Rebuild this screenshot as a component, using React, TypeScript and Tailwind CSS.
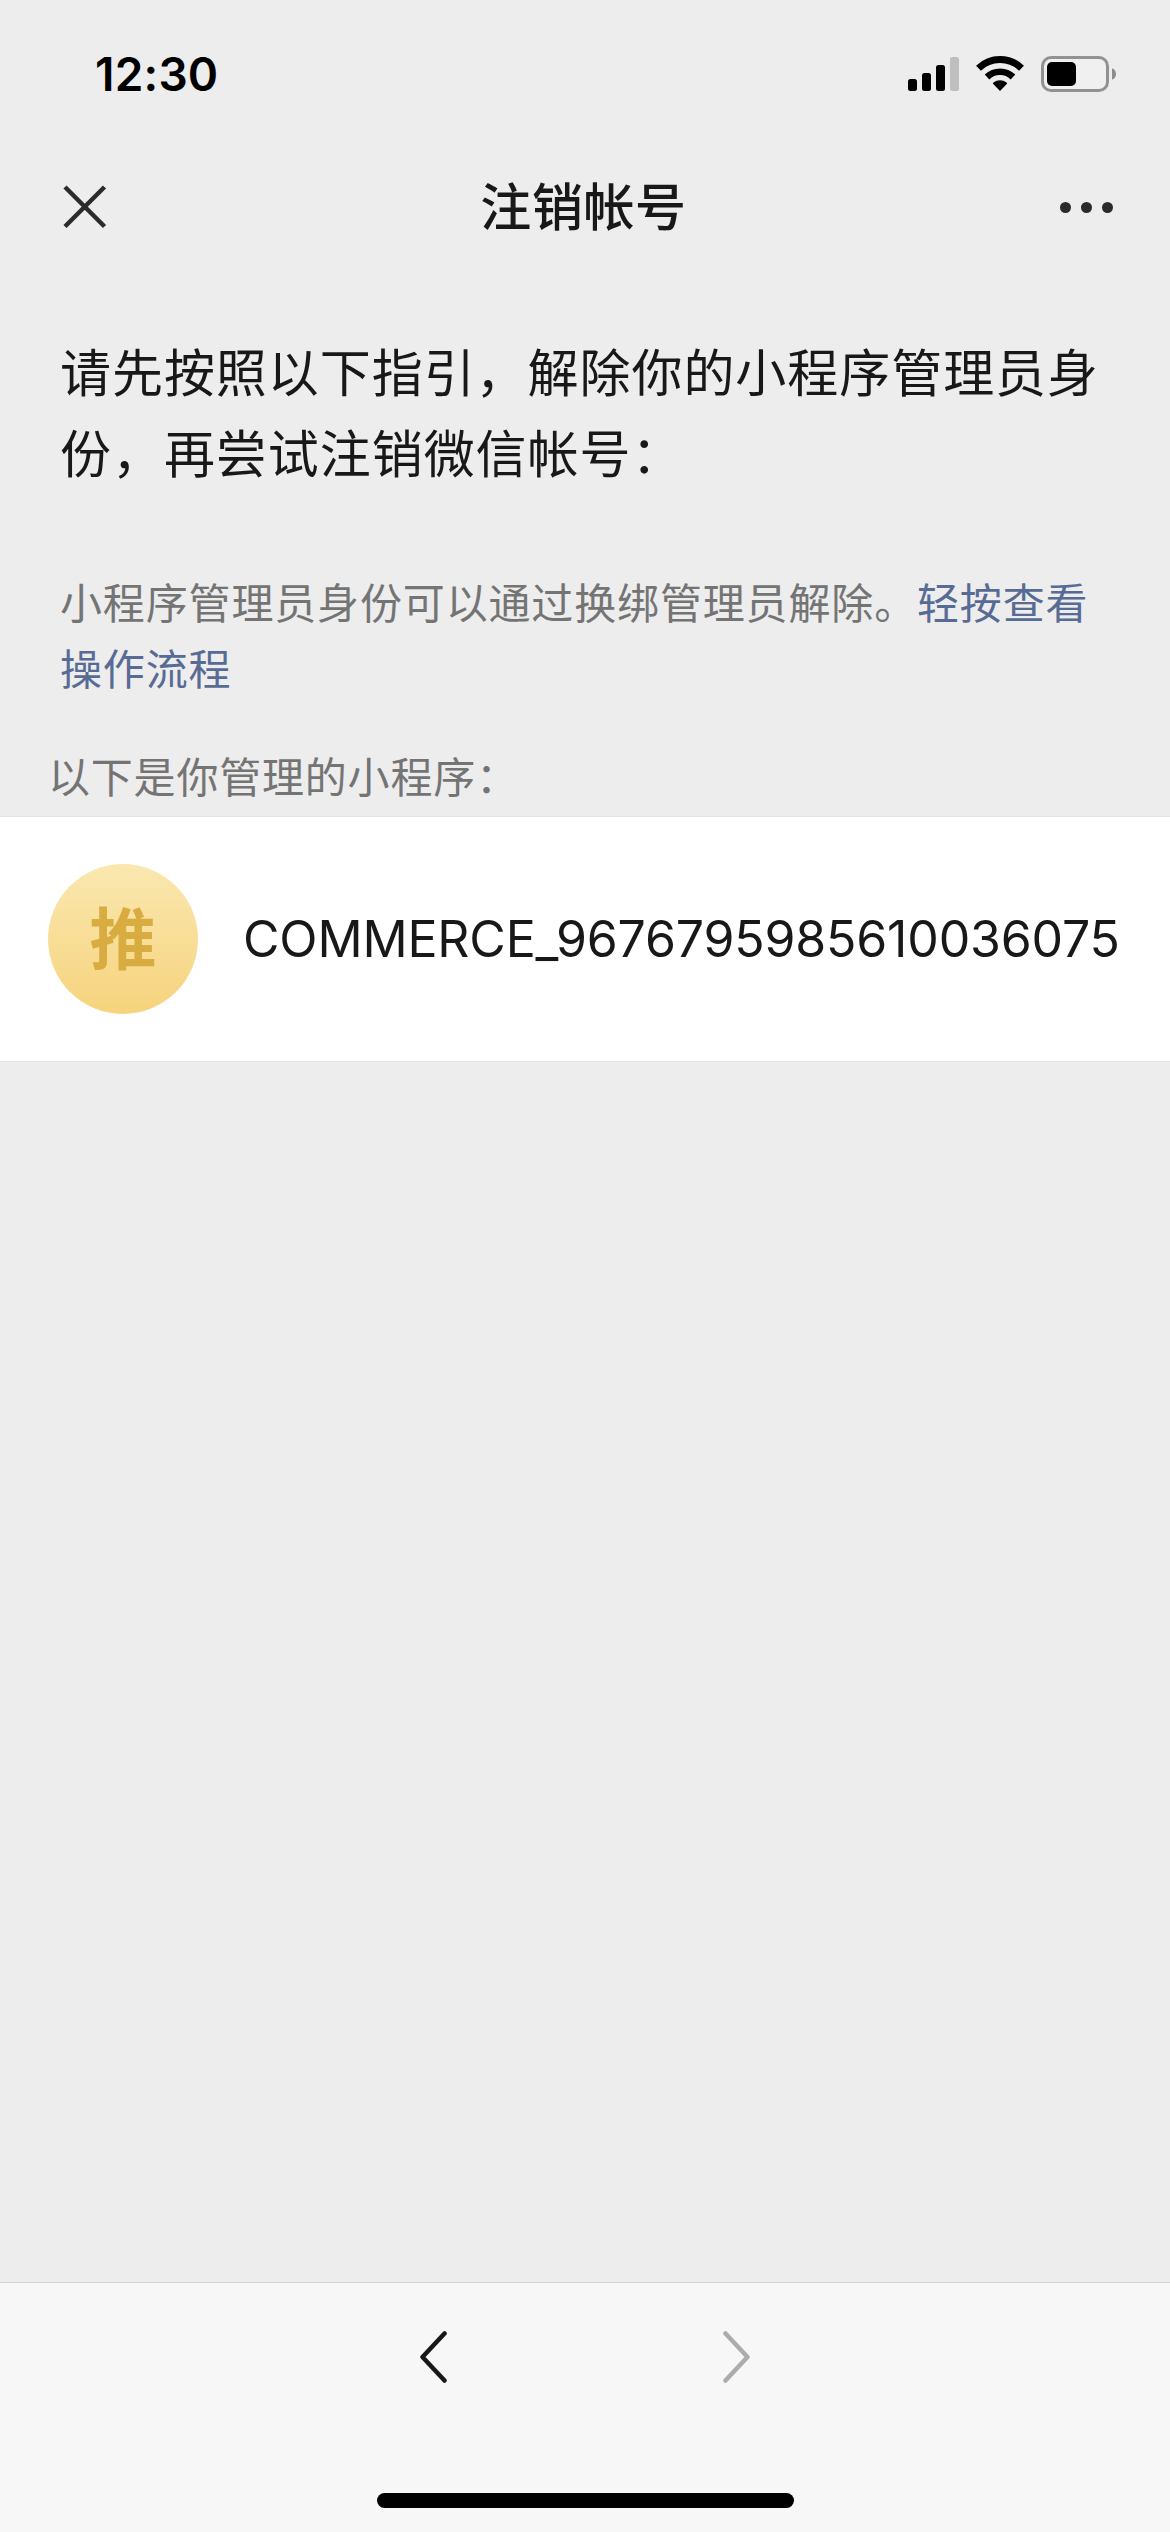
import React from "react";

const SignalIcon = () => (
  <svg width="51" height="34" viewBox="0 0 51 34">
    <rect x="0" y="22" width="9" height="12" rx="2.5" fill="#000" />
    <rect x="14" y="16" width="9" height="18" rx="2.5" fill="#000" />
    <rect x="28" y="8" width="9" height="26" rx="2.5" fill="#000" />
    <rect x="42" y="0" width="9" height="34" rx="2.5" fill="#bfbfbf" />
  </svg>
);

const WifiIcon = () => (
  <svg width="48" height="36" viewBox="0 0 48 36" fill="none">
    <path d="M2.5 13.2a31 31 0 0 1 43 0" stroke="#000" strokeWidth="7" />
    <path d="M11 22a18.8 18.8 0 0 1 26 0" stroke="#000" strokeWidth="6.6" />
    <path d="M24 36l-6.8-7q-.8-.9.2-1.6a11 11 0 0 1 13.2 0q1 .7.2 1.6z" fill="#000" />
  </svg>
);

const BatteryIcon = () => (
  <svg width="75" height="36" viewBox="0 0 75 36">
    <rect x="1.5" y="1.5" width="65" height="33" rx="8.5" fill="#f0f0f0" stroke="#929292" strokeWidth="3" />
    <rect x="6" y="6" width="29" height="24" rx="5" fill="#000" />
    <path d="M71 12.3c2.6 1 4 3.2 4 5.7s-1.4 4.7-4 5.7z" fill="#8c8c8c" />
  </svg>
);

const StatusBar = () => (
  <div className="flex h-[147px] items-start justify-between pl-[95px] pr-[54px]">
    <span className="mt-[44px] text-[46px] font-semibold leading-[60px] tracking-[0.2px] text-black">
      12:30
    </span>
    <div className="mt-[55px] flex items-end">
      <SignalIcon />
      <div className="ml-[17px]">
        <WifiIcon />
      </div>
      <div className="-mb-px ml-[17px]">
        <BatteryIcon />
      </div>
    </div>
  </div>
);

const NavBar = () => (
  <div className="flex h-[120px] items-center justify-between pl-[63px] pr-[57px]">
    <svg width="146" height="44" viewBox="0 0 146 44">
      <path d="M2 2l39.5 39.5M41.5 2L2 41.5" stroke="#2b2b2b" strokeWidth="4.5" />
    </svg>
    <h1 className="pt-0.5 text-[51px] font-medium leading-[72px] tracking-[0.6px] text-[#181818]">
      注销帐号
    </h1>
    <div className="flex w-[155px] justify-end gap-2.5">
      {[0, 1, 2].map((dot) => (
        <span key={dot} className="h-[11px] w-[11px] rounded-full bg-[#2b2b2b]" />
      ))}
    </div>
  </div>
);

const Footer = () => (
  <div className="flex h-[250px] flex-col items-center justify-between border-t border-[#d2d2d2] bg-[#f7f7f7] pb-6 pt-12">
    <div className="flex w-[330px] justify-between">
      <svg width="27" height="52" viewBox="0 0 27 52" fill="none">
        <path d="M24.5 2.5L2.5 26l22 23.5" stroke="#181818" strokeWidth="4.5" strokeLinecap="round" strokeLinejoin="round" />
      </svg>
      <svg width="27" height="52" viewBox="0 0 27 52" fill="none">
        <path d="M2.5 2.5l22 23.5-22 23.5" stroke="#acacac" strokeWidth="4.5" strokeLinecap="round" strokeLinejoin="round" />
      </svg>
    </div>
    <div className="h-[15px] w-[417px] rounded-full bg-black" />
  </div>
);

const App = () => {
  const miniPrograms = [{ badge: "推", name: "COMMERCE_9676795985610036075" }];

  return (
    <div className="flex h-[2532px] w-[1170px] flex-col overflow-hidden bg-[#ededed] font-['Inter','Noto_Sans_CJK_SC',sans-serif]">
      <StatusBar />
      <NavBar />

      <main className="flex-1">
        <div className="px-[60px] pt-[66px]">
          <h2 className="text-[51px] font-normal leading-[81px] tracking-[0.95px] text-[#181818]">
            请先按照以下指引，解除你的小程序管理员身份，再尝试注销微信帐号：
          </h2>
          <p className="mt-[76px] text-[42px] leading-[66px] tracking-[0.85px] text-[#747474]">
            小程序管理员身份可以通过换绑管理员解除。
            <a className="text-[#576b95]">轻按查看操作流程</a>
          </p>
        </div>

        <p className="mt-[42px] pl-12 text-[42px] leading-[66px] tracking-[0.8px] text-[#747474]">
          以下是你管理的小程序：
        </p>

        <ul className="mt-[5px] border-y border-[#e3e3e3] bg-white">
          {miniPrograms.map((item) => (
            <li key={item.name} className="flex h-[244px] items-center pl-12">
              <div className="flex h-[150px] w-[150px] items-center justify-center rounded-full bg-gradient-to-b from-[#fae8b0] to-[#f6d37c]">
                <span className="text-[67px] font-bold leading-none text-[#d9ac41]">{item.badge}</span>
              </div>
              <span className="ml-[45px] whitespace-nowrap text-[50px] leading-[72px] tracking-[-0.17px] text-[#181818]">
                {item.name}
              </span>
            </li>
          ))}
        </ul>
      </main>

      <Footer />
    </div>
  );
};

export default App;
